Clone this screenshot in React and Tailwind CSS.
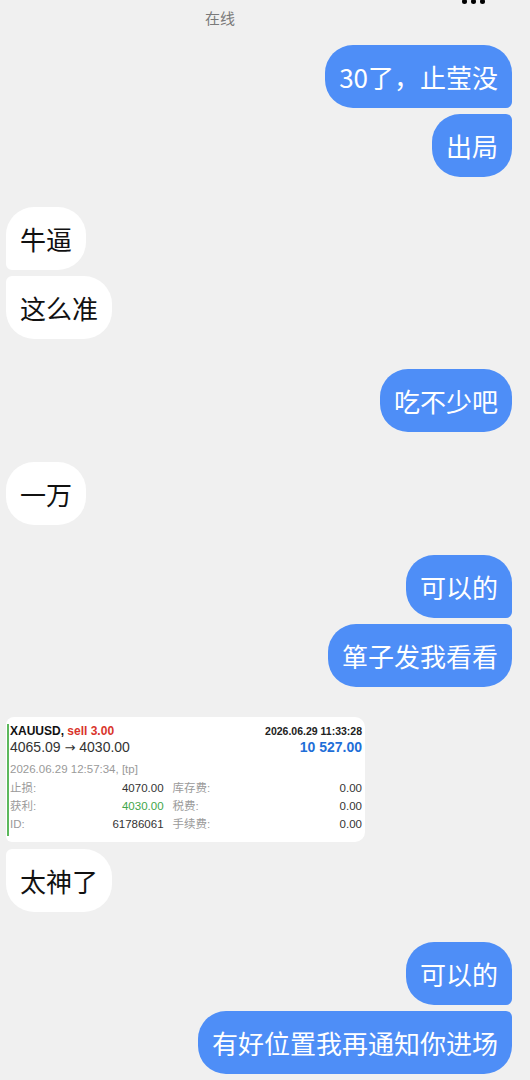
import React from 'react';

const messages = [
  { id: 1, side: 'right', text: '30了，止莹没', shape: 'first', mt: 0 },
  { id: 2, side: 'right', text: '出局', shape: 'last', mt: 6 },
  { id: 3, side: 'left', text: '牛逼', shape: 'first', mt: 30 },
  { id: 4, side: 'left', text: '这么准', shape: 'last', mt: 6 },
  { id: 5, side: 'right', text: '吃不少吧', shape: 'single', mt: 30 },
  { id: 6, side: 'left', text: '一万', shape: 'single', mt: 30 },
  { id: 7, side: 'right', text: '可以的', shape: 'first', mt: 30 },
  { id: 8, side: 'right', text: '箪子发我看看', shape: 'last', mt: 6 },
  { id: 9, side: 'left', type: 'trade', mt: 30 },
  { id: 10, side: 'left', text: '太神了', shape: 'last', mt: 7 },
  { id: 11, side: 'right', text: '可以的', shape: 'first', mt: 30 },
  { id: 12, side: 'right', text: '有好位置我再通知你进场', shape: 'last', mt: 6 },
];

// corner shapes, written out so tailwind picks them up
const getShape = (side, shape) => {
  if (side === 'right') {
    switch (shape) {
      case 'first':
        return 'rounded-tl-[28px] rounded-tr-[28px] rounded-br-[6px] rounded-bl-[28px]';
      case 'last':
        return 'rounded-tl-[28px] rounded-tr-[6px] rounded-br-[28px] rounded-bl-[28px]';
      default:
        return 'rounded-[28px]';
    }
  }
  switch (shape) {
    case 'first':
      return 'rounded-tl-[28px] rounded-tr-[28px] rounded-br-[28px] rounded-bl-[6px]';
    case 'last':
      return 'rounded-tl-[6px] rounded-tr-[28px] rounded-br-[28px] rounded-bl-[28px]';
    default:
      return 'rounded-[28px]';
  }
};

const Bubble = ({ side, text, shape }) => (
  <div className={side === 'right' ? 'flex justify-end pr-[18px]' : 'flex justify-start pl-[6px]'}>
    <div
      className={`px-[14px] py-[14px] text-[26px] leading-[35px] whitespace-nowrap ${
        side === 'right' ? 'bg-[#4e8ef7] text-white' : 'bg-white text-[#111]'
      } ${getShape(side, shape)}`}
    >
      {text}
    </div>
  </div>
);

const rows = [
  ['止损:', '4070.00', 'text-[#333]', '库存费:', '0.00'],
  ['获利:', '4030.00', 'text-[#3fa64a]', '税费:', '0.00'],
  ['ID:', '61786061', 'text-[#333]', '手续费:', '0.00'],
];

const TradeCard = () => (
  <div className="pl-[6px]">
    <div className="w-[359px] h-[125px] bg-white rounded-tl-[8px] rounded-tr-[10px] rounded-br-[10px] rounded-bl-[6px] pl-[1px] pr-[3px] pt-[7px] font-['Liberation_Sans','Noto_Sans_CJK_SC',sans-serif]">
      <div className="border-l-2 border-[#5cb85c] pl-[1px] h-[112px]">
        <div className="flex justify-between items-baseline h-[14px] leading-[14px]">
          <span className="text-[12px] font-bold text-[#111]">
            XAUUSD, <span className="text-[#d9342b]">sell 3.00</span>
          </span>
          <span className="text-[10.5px] font-bold text-[#222]">2026.06.29 11:33:28</span>
        </div>
        <div className="flex justify-between items-center h-[19px]">
          <span className="text-[14px] text-[#333]">
            4065.09 <span className="font-['DejaVu_Sans',sans-serif] text-[13px]">→</span> 4030.00
          </span>
          <span className="text-[14px] font-bold text-[#1f6fd8]">10 527.00</span>
        </div>
        <div className="mt-[4px] h-[16px] leading-[16px] text-[11.5px] text-[#9a9a9a]">
          2026.06.29 12:57:34, [tp]
        </div>
        <div className="mt-[3px]">
          {rows.map((r) => (
            <div key={r[0]} className="flex h-[18px] items-center text-[11.5px]">
              <div className="w-[154px] flex justify-between">
                <span className="text-[#9a9a9a]">{r[0]}</span>
                <span className={r[2]}>{r[1]}</span>
              </div>
              <div className="ml-[9px] w-[190px] flex justify-between">
                <span className="text-[#9a9a9a]">{r[3]}</span>
                <span className="text-[#333]">{r[4]}</span>
              </div>
            </div>
          ))}
        </div>
      </div>
    </div>
  </div>
);

const App = () => {
  return (
    <div className="w-[530px] h-[1080px] overflow-hidden bg-[#f0f0f0] font-['Noto_Sans_CJK_SC','Noto_Sans',sans-serif]">
      {/* header */}
      <div className="flex h-[45px] items-start">
        <div className="w-[440px] pt-[7px] text-center text-[15px] leading-[22px] text-[#7a7a7a]">在线</div>
        <div className="ml-[22px] -mt-[1px] flex gap-[4px]">
          <span className="w-[5px] h-[5px] rounded-full bg-black" />
          <span className="w-[5px] h-[5px] rounded-full bg-black" />
          <span className="w-[5px] h-[5px] rounded-full bg-black" />
        </div>
      </div>

      <div className="flex flex-col">
        {messages.map((m) => (
          <div key={m.id} style={{ marginTop: m.mt }}>
            {m.type === 'trade' ? (
              <TradeCard />
            ) : (
              <Bubble side={m.side} text={m.text} shape={m.shape} />
            )}
          </div>
        ))}
      </div>
    </div>
  );
};

export default App;
